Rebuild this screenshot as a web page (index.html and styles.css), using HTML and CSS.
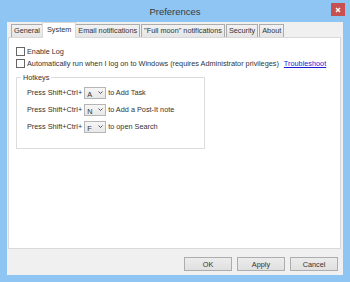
FILE: index.html
```html
<!DOCTYPE html>
<html lang="en">
<head>
  <meta charset="UTF-8" />
  <title>Preferences</title>
  <link rel="stylesheet" href="styles.css">
</head>
<body>
  <div class="window">
    <div class="titlebar">
      <span></span>
      <span class="title">Preferences</span>
      <span class="close">
        <svg width="6" height="6" viewBox="0 0 6 6"><path d="M1 1 L5 5 M5 1 L1 5" stroke="#fff" stroke-width="1.4"/></svg>
      </span>
    </div>

    <div class="client">
      <div class="tabs">
        <div class="tab">General</div>
        <div class="tab active">System</div>
        <div class="tab">Email notifications</div>
        <div class="tab">"Full moon" notifications</div>
        <div class="tab">Security</div>
        <div class="tab">About</div>
      </div>

      <div class="panel">
        <div class="check-row"><span class="checkbox"></span>Enable Log</div>
        <div class="check-row">
          <span class="checkbox"></span>Automatically run when I log on to Windows (requires Administrator privileges)
          <a class="link" href="#">Troubleshoot</a>
        </div>

        <fieldset class="hotkeys">
          <legend>Hotkeys</legend>
          <div class="hotkey-row">Press Shift+Ctrl+
            <span class="combo"><span class="key">A</span><svg width="5" height="3" viewBox="0 0 5 3"><path d="M0.5 0.5 L2.5 2.5 L4.5 0.5" fill="none" stroke="#444" stroke-width="0.9"/></svg></span>
            to Add Task</div>
          <div class="hotkey-row">Press Shift+Ctrl+
            <span class="combo"><span class="key">N</span><svg width="5" height="3" viewBox="0 0 5 3"><path d="M0.5 0.5 L2.5 2.5 L4.5 0.5" fill="none" stroke="#444" stroke-width="0.9"/></svg></span>
            to Add a Post-It note</div>
          <div class="hotkey-row">Press Shift+Ctrl+
            <span class="combo"><span class="key">F</span><svg width="5" height="3" viewBox="0 0 5 3"><path d="M0.5 0.5 L2.5 2.5 L4.5 0.5" fill="none" stroke="#444" stroke-width="0.9"/></svg></span>
            to open Search</div>
        </fieldset>
      </div>

      <div class="buttons">
        <button class="btn">OK</button>
        <button class="btn">Apply</button>
        <button class="btn">Cancel</button>
      </div>
    </div>
  </div>
</body>
</html>
```

FILE: styles.css
```css
body {
  margin: 0;
  font-family: 'Liberation Sans', Arial, sans-serif;
  font-size: 7.3px;
  color: #333;
}

.window {
  width: 350px;
  height: 282px;
  background: #8ec5f3;
  overflow: hidden;
}

.titlebar {
  height: 22px;
  display: grid;
  grid-template-columns: 1fr auto 1fr;
  align-items: center;
}

.title {
  font-size: 9.5px;
  color: #3a3a3a;
  padding-top: 1px;
}

.close {
  justify-self: end;
  margin-right: 5px;
  margin-top: -3px;
  width: 14px;
  height: 13px;
  background: #c75050;
  display: flex;
  align-items: center;
  justify-content: center;
}

.client {
  margin: 0 7px;
  height: 253px;
  background: #f0f0f0;
  padding-top: 2px;
  box-sizing: border-box;
}

.tabs {
  display: flex;
  align-items: flex-end;
  height: 13px;
  padding-left: 4px;
}

.tab {
  height: 13px;
  box-sizing: border-box;
  border: 1px solid #acacac;
  border-bottom: none;
  background: linear-gradient(#f2f2f2, #e5e5e5);
  padding: 0 2px;
  margin-right: 1px;
  line-height: 12px;
  white-space: nowrap;
}

.tab.active {
  height: 16px;
  margin: 0 -1px -1px -2px;
  padding: 0 4px;
  background: #fff;
  border-color: #d9d9d9;
  line-height: 13px;
  position: relative;
  z-index: 1;
}

.panel {
  margin: 0 2px 0 1px;
  height: 212px;
  box-sizing: border-box;
  border: 1px solid #d9d9d9;
  background: #fff;
  padding: 7px 7px;
}

.check-row {
  height: 12px;
  display: flex;
  align-items: center;
  white-space: nowrap;
}

.checkbox {
  width: 9px;
  height: 9px;
  box-sizing: border-box;
  border: 1px solid #666;
  background: #fff;
  margin-right: 2px;
}

.link {
  color: #1c1cd6;
  margin-left: 5px;
}

.hotkeys {
  margin: 4px 0 0 0;
  width: 189px;
  box-sizing: border-box;
  border: 1px solid #dcdcdc;
  padding: 2px 0 13px 4px;
}

.hotkeys legend {
  padding: 0 2px;
  line-height: 9px;
}

.hotkey-row {
  height: 17px;
  display: flex;
  align-items: center;
  padding-left: 6px;
  white-space: nowrap;
}

.combo {
  width: 22px;
  height: 12px;
  box-sizing: border-box;
  border: 1px solid #b5b5b5;
  background: linear-gradient(#f6f6f6, #e8e8e8);
  margin: 0 2px 0 2px;
  display: flex;
  align-items: center;
  justify-content: space-between;
  padding: 0 2px 0 2px;
}

.key {
  padding-top: 3px;
}

.buttons {
  display: flex;
  justify-content: flex-end;
  gap: 5px;
  margin-top: 8px;
  padding-right: 5px;
}

.btn {
  width: 48px;
  height: 14px;
  box-sizing: border-box;
  border: 1px solid #adadad;
  background: linear-gradient(#ececec, #e0e0e0);
  font-family: inherit;
  font-size: 7.3px;
  color: #333;
  padding: 0;
}
```
